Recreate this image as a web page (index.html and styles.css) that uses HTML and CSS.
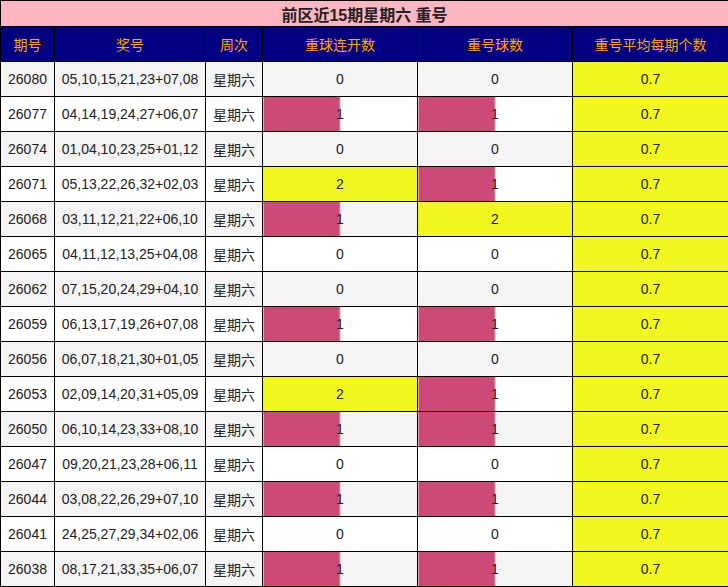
FILE: index.html
```html
<!DOCTYPE html>
<html lang="zh">
<head>
<meta charset="utf-8">
<title>前区近15期星期六 重号</title>
<link rel="stylesheet" href="styles.css">
</head>
<body>
<table class="tbl">
  <colgroup>
    <col class="c1"><col class="c2"><col class="c3"><col class="c4"><col class="c5"><col class="c6">
  </colgroup>
  <thead>
    <tr class="title"><th colspan="6">前区近15期星期六 重号</th></tr>
    <tr class="head"><th>期号</th><th>奖号</th><th>周次</th><th>重球连开数</th><th>重号球数</th><th>重号平均每期个数</th></tr>
  </thead>
  <tbody>
    <tr class="odd"><td>26080</td><td>05,10,15,21,23+07,08</td><td>星期六</td><td>0</td><td>0</td><td class="avg">0.7</td></tr>
    <tr><td>26077</td><td>04,14,19,24,27+06,07</td><td>星期六</td><td class="bar">1</td><td class="bar">1</td><td class="avg">0.7</td></tr>
    <tr class="odd"><td>26074</td><td>01,04,10,23,25+01,12</td><td>星期六</td><td>0</td><td>0</td><td class="avg">0.7</td></tr>
    <tr><td>26071</td><td>05,13,22,26,32+02,03</td><td>星期六</td><td class="full">2</td><td class="bar">1</td><td class="avg">0.7</td></tr>
    <tr class="odd"><td>26068</td><td>03,11,12,21,22+06,10</td><td>星期六</td><td class="bar">1</td><td class="full">2</td><td class="avg">0.7</td></tr>
    <tr><td>26065</td><td>04,11,12,13,25+04,08</td><td>星期六</td><td>0</td><td>0</td><td class="avg">0.7</td></tr>
    <tr class="odd"><td>26062</td><td>07,15,20,24,29+04,10</td><td>星期六</td><td>0</td><td>0</td><td class="avg">0.7</td></tr>
    <tr><td>26059</td><td>06,13,17,19,26+07,08</td><td>星期六</td><td class="bar">1</td><td class="bar">1</td><td class="avg">0.7</td></tr>
    <tr class="odd"><td>26056</td><td>06,07,18,21,30+01,05</td><td>星期六</td><td>0</td><td>0</td><td class="avg">0.7</td></tr>
    <tr><td>26053</td><td>02,09,14,20,31+05,09</td><td>星期六</td><td class="full">2</td><td class="bar">1</td><td class="avg">0.7</td></tr>
    <tr class="odd"><td>26050</td><td>06,10,14,23,33+08,10</td><td>星期六</td><td class="bar">1</td><td class="bar">1</td><td class="avg">0.7</td></tr>
    <tr><td>26047</td><td>09,20,21,23,28+06,11</td><td>星期六</td><td>0</td><td>0</td><td class="avg">0.7</td></tr>
    <tr class="odd"><td>26044</td><td>03,08,22,26,29+07,10</td><td>星期六</td><td class="bar">1</td><td class="bar">1</td><td class="avg">0.7</td></tr>
    <tr><td>26041</td><td>24,25,27,29,34+02,06</td><td>星期六</td><td>0</td><td>0</td><td class="avg">0.7</td></tr>
    <tr class="odd"><td>26038</td><td>08,17,21,33,35+06,07</td><td>星期六</td><td class="bar">1</td><td class="bar">1</td><td class="avg">0.7</td></tr>
  </tbody>
</table>
</body>
</html>
```
FILE: styles.css
```css
html, body {
  margin: 0;
  padding: 0;
  background: #fff;
}
.tbl {
  width: 728px;
  border-collapse: collapse;
  table-layout: fixed;
  font-family: "Liberation Sans", "Noto Sans CJK SC", sans-serif;
  font-size: 14px;
  color: #222;
}
.c1 { width: 54px; }
.c2 { width: 151px; }
.c3 { width: 57px; }
.c4 { width: 155px; }
.c5 { width: 155px; }
.c6 { width: 156px; }
.tbl th, .tbl td {
  border: 1px solid #000;
  padding: 0;
  text-align: center;
  vertical-align: middle;
}
.title th {
  background: #ffb6c1;
  font-size: 16px;
  font-weight: bold;
  color: #222;
  height: 25px;
}
.head th {
  background: #000080;
  color: #ffa500;
  font-weight: normal;
  height: 34px;
}
.tbl td {
  height: 34px;
  background: #fff;
}
.tbl tr.odd td {
  background: #f4f4f4;
}
.tbl td.avg, .tbl tr.odd td.avg, .tbl td.full, .tbl tr.odd td.full {
  background: #f1f71f;
}
.tbl td.bar {
  background: linear-gradient(to right, #cc4a77 0, #cc4a77 calc(50% - 1px), #e8a0ba calc(50% - 1px), #e8a0ba 50%, transparent 50%), #fff;
}
.tbl tr.odd td.bar {
  background: linear-gradient(to right, #cc4a77 0, #cc4a77 calc(50% - 1px), #e8a0ba calc(50% - 1px), #e8a0ba 50%, transparent 50%), #f4f4f4;
}
```
